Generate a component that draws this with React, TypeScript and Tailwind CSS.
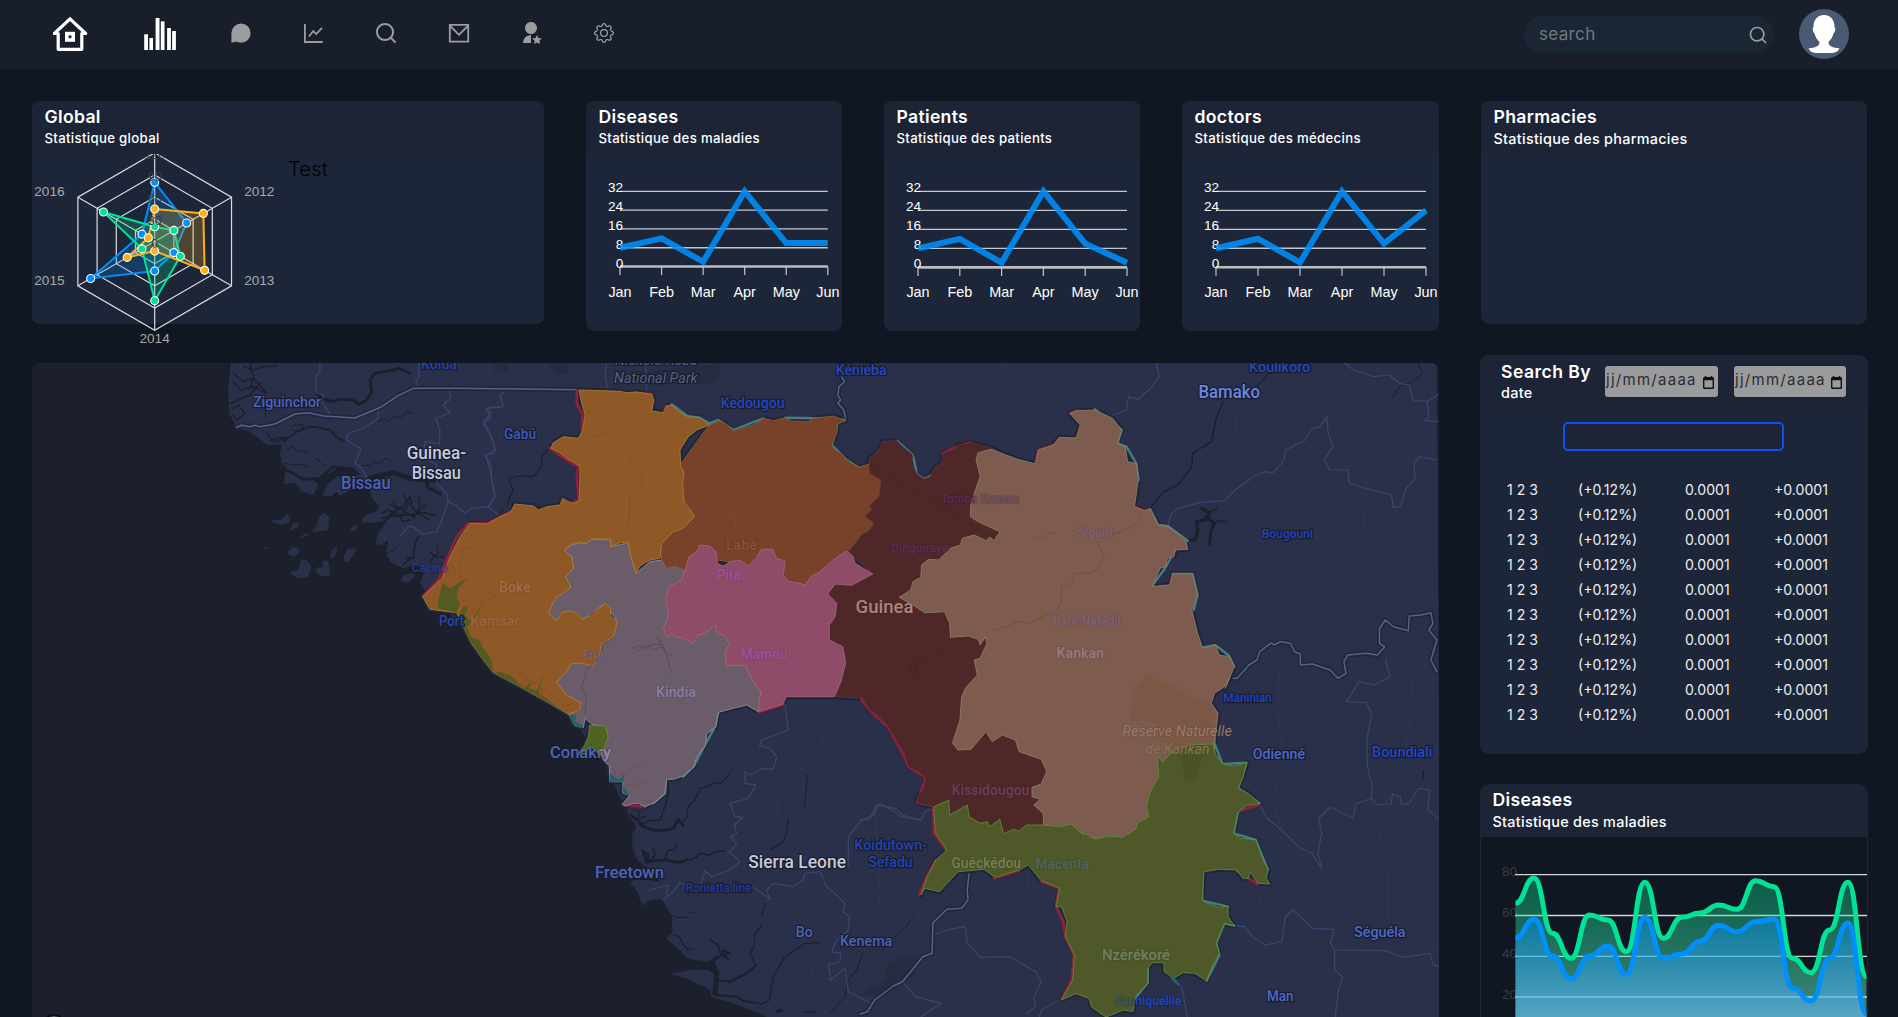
import React from "react";
import { RiUserStarFill, RiSearchLine } from "react-icons/ri";
import { BsGear } from "react-icons/bs";

/* ---------- map geometry ---------- */

type Sheet = "A" | "B" | "C" | "D" | "E";

// Map sheets: origin and units per pixel of each digitised grid.
const SHEETS: Record<Sheet, [number, number, number, number]> = {
  A: [20, 350, 3, 3],
  B: [400, 350, 3, 3],
  C: [820, 350, 2.529, 3],
  D: [400, 660, 3, 3],
  E: [860, 660, 2.7034, 3],
};

// Turns "B 10,20 30,40 D 5,6" into a polyline in map pixels.
function trace(src: string): string {
  let s = SHEETS.A;
  const out: string[] = [];
  for (const tok of src.trim().split(/\s+/)) {
    if (tok in SHEETS) {
      s = SHEETS[tok as Sheet];
      continue;
    }
    const [x, y] = tok.split(",").map(Number);
    out.push(`${(s[0] + x / s[2]).toFixed(1)},${(s[1] + y / s[3]).toFixed(1)}`);
  }
  return out.join(" ");
}

const LAND =
  "A 632,38 625,110 627,190 650,232 690,245 720,268 742,284 785,285 780,310 785,340 800,350 790,400 800,403 825,398 845,425 880,434 895,405 880,390 920,375 960,350 1000,352 1020,375 950,380 925,400 907,437 935,438 950,425 960,438 1000,415 1050,420 1055,445 1075,465 1075,480 1030,500 1025,515 1045,520 1100,512 1075,550 1065,582 1080,586 1105,570 1098,610 1110,635 1150,655 1180,645 1215,655 1200,700 1212,718 B 120,760 300,960 D 500,150 530,200 600,280 668,432 682,450 685,470 705,490 707,508 697,520 697,560 712,600 735,618 760,640 780,665 745,660 700,660 690,668 712,695 727,738 750,720 785,718 800,740 815,770 817,815 797,835 840,870 860,895 930,910 950,945 925,930 870,930 810,942 860,955 930,990 935,1012 1000,1030 1110,1075 E 1570,1075 C 1560,38";

const ISLANDS = [
  "A 752,512 785,508 800,492 812,500 805,520 785,525 765,520",
  "A 805,545 820,520 835,517 835,530 815,540",
  "A 872,545 890,525 898,500 910,488 928,500 925,540 895,545",
  "A 840,562 855,550 870,553 850,562",
  "A 802,605 820,590 838,598 838,610 820,620 808,615",
  "A 810,665 835,660 842,630 860,630 875,650 865,680 830,685",
  "A 885,665 893,650 905,655 908,632 925,632 930,665 925,680 905,678",
  "A 970,625 980,598 1000,595 1010,600 1000,615 985,635 975,637",
  "A 930,625 935,600 950,590 952,600 938,628",
  "A 988,540 1005,525 1015,530 1000,545",
  "A 1143,690 1150,675 1180,668 1188,678 1165,697 1150,697",
  "A 732,592 748,592 742,598 732,598",
];

const REGIONS: [string, string, string][] = [
  [
    "#6a5c69",
    "#8c8fa3",
    "B 492,600 515,585 540,578 560,580 575,568 632,568 632,590 685,578 690,610 708,670 750,635 785,630 800,655 825,650 855,660 868,620 1000,800 1040,950 D 1045,35 1060,65 1083,95 1075,155 1040,135 1000,145 955,157 948,200 920,222 917,255 890,290 882,320 850,348 820,358 800,358 795,400 760,430 735,440 715,430 700,430 675,438 668,432 690,405 668,400 668,365 630,365 628,318 610,300 600,270 625,230 615,200 575,192 555,175 550,203 525,197 507,165 543,128 500,105 470,68 500,20 B 515,940 545,935 580,948 605,880 652,815 615,760 548,808 510,782 470,812 445,790 465,745 512,712 497,680 520,655 515,620",
  ],
  [
    "#784129",
    "#7d6030",
    "B 928,225 955,212 975,220 1000,242 1060,225 1090,205 1120,212 1155,203 1175,213 1225,215 1240,205 1300,198 1337,212 1312,222 1312,245 1295,285 1305,300 1325,312 1340,330 1375,352 1408,342 1410,370 1443,390 1438,440 1410,465 1415,480 1395,500 1422,518 1410,540 1385,555 1350,600 1300,630 1260,665 1235,678 1215,706 1200,700 1165,695 1118,598 1085,598 1045,648 990,635 868,620 855,660 825,650 800,655 785,630 780,580 800,400",
  ],
  [
    "#4f2728",
    "#5f3336",
    "C 125,342 125,325 150,300 158,275 195,272 210,290 235,315 232,340 245,372 262,387 280,380 285,360 310,335 310,310 340,298 350,285 380,278 432,293 470,315 600,500 600,900 E 505,335 600,500 400,530 200,440 155,430 155,410 170,390 178,352 158,335 130,320 120,280 95,235 75,198 50,165 25,150 10,115 0,112 D 1390,115 1303,110 B 1325,985 1337,940 1328,890 1288,870 1288,825 1305,800 1310,760 1283,732 1305,702 1418,672 1340,602 1350,600 1385,555 1410,540 1422,518 1395,500 1415,480 1410,465 1438,440 1443,390 1410,370",
  ],
  [
    "#8f4c68",
    "#a06379",
    "B 868,620 890,605 900,585 930,588 948,605 952,640 970,648 990,635 1020,630 1045,648 1068,625 1085,598 1118,598 1128,625 1155,632 1150,675 1165,695 1200,700 1215,706 1235,678 1260,665 1300,630 1340,602 1360,620 1365,640 1418,672 1355,706 1305,702 1283,732 1310,760 1305,800 1288,825 1288,870 1328,890 1337,940 1325,985 D 1325,60 1303,110 1158,110 1150,132 1075,155 1078,120 1083,95 1060,65 1045,35 B 1040,950 1010,945 980,948 975,910 988,880 970,855 950,850 948,825 915,850 895,855 880,880 850,865 825,860 815,852 800,862 790,835 805,800 797,745 805,712 845,690 855,660",
  ],
  [
    "#8f5927",
    "#ab7a2f",
    "B 538,120 660,124 680,128 710,126 755,133 762,150 755,183 790,188 800,168 815,165 835,183 862,200 900,203 928,225 890,240 865,260 840,300 842,350 852,365 848,400 852,455 884,498 850,535 820,545 805,560 785,580 780,625 750,630 720,648 708,670 690,610 685,575 660,578 632,590 632,568 575,566 560,580 540,576 515,583 492,600 515,620 520,655 497,680 512,712 490,730 465,745 445,790 470,812 485,788 510,782 530,790 548,808 575,795 615,760 632,775 632,798 652,815 640,860 605,880 600,910 580,948 545,940 515,940 500,965 470,995 D 470,68 500,105 543,128 538,150 505,163 440,125 350,75 280,38 B 250,930 213,878 190,830 170,788 90,778 68,740 125,685 150,620 180,560 210,520 262,522 300,500 330,488 345,462 400,468 415,480 440,470 480,465 488,445 500,452 520,460 538,452 540,348 500,325 475,305 452,295 460,278 490,260 535,265 548,240 555,195 545,160",
  ],
  [
    "#7d5b4e",
    "#8a7d65",
    "C 400,308 432,298 470,315 500,328 545,342 552,300 590,285 605,262 648,264 658,225 632,190 650,182 695,180 740,205 763,240 752,280 772,290 778,335 800,340 805,390 795,470 820,482 835,478 855,525 880,530 925,570 930,598 898,600 895,620 878,625 875,650 860,655 840,710 885,705 892,672 942,672 955,735 940,780 955,850 968,895 1000,885 1010,915 1035,920 1048,950 1035,985 1025,1015 E 1000,50 985,80 958,100 950,130 968,160 958,250 960,300 850,400 700,560 600,520 497,495 495,460 470,435 488,418 465,410 465,382 490,372 505,335 490,298 430,275 420,240 385,225 358,245 340,215 300,268 265,270 250,250 270,180 275,110 285,85 C 398,975 390,930 405,925 422,880 418,860 405,885 400,868 375,858 330,862 328,820 315,785 265,788 235,765 200,742 230,720 235,695 255,682 257,645 275,628 300,630 330,595 355,585 360,565 390,555 420,572 430,560 440,572 455,545 400,515 380,500 382,460 405,380 395,330",
  ],
  [
    "#4e5828",
    "#5a8c3b",
    "E 200,440 240,420 242,465 290,435 295,470 325,490 345,485 350,500 378,478 388,522 415,508 430,513 450,495 497,495 540,500 570,492 610,530 640,537 670,528 710,532 745,508 750,490 780,470 775,440 780,410 790,385 808,350 803,290 818,305 850,270 890,255 955,252 960,280 980,312 1010,318 1045,308 1035,355 1022,385 1050,400 1080,430 1045,437 1022,455 1010,520 1030,535 1070,540 1090,600 1103,630 1098,655 1108,672 1075,670 1055,635 1050,655 1035,655 1018,630 970,628 930,635 925,722 970,742 995,738 995,770 1012,797 985,790 963,850 972,880 955,910 937,962 905,940 872,938 848,955 822,935 822,908 790,908 778,925 778,968 745,1010 738,1055 712,1050 665,1071 650,1060 625,1040 620,1015 585,1000 545,1020 575,960 580,885 555,830 560,785 545,740 530,740 540,685 490,662 470,635 455,615 430,630 365,652 335,628 265,635 215,695 175,685 165,705 180,655 205,600 235,570 205,520",
  ],
  ["#4f6323", "#6c8a30", "D 570,196 615,198 625,230 610,270 600,285 575,262 535,282 555,255 565,230"],
];

const COAST_GREEN = [
  "B 113,775 118,735 128,700 150,715 205,682 175,715 170,745 180,760 170,788",
  "B 175,800 190,770 205,768 195,795 215,815 250,750 230,800 200,830 213,860 240,872 250,895 275,930 280,968 250,930 213,878",
  "D 280,38 300,35 335,48 355,70 372,85 400,60 385,85 410,90 430,50 415,95 450,125 500,160 440,125 350,75",
];
const COAST_TEAL = ["D 507,165 530,165 525,185 550,195 548,205 520,195", "D 630,340 655,360 675,340 665,375 690,405 668,400 668,365 630,365", "E 838,955 848,950 870,980 858,975"];

// Misaligned edge of the administrative layer, showing red along the border.
const RED_EDGES = [
  "B 531,122 530,160 548,195 545,240",
  "B 536,350 530,380 536,450 520,456",
  "B 450,295 475,312 505,333 536,350",
  "B 70,738 115,690 140,630 170,560 205,520 262,520 330,485",
  "B 755,133 700,128",
  "B 793,186 797,168",
  "D 1075,157 1150,134",
  "D 668,434 735,440",
  "E 0,112 25,150 75,200 118,285 130,320 178,352 155,428 200,438",
  "E 198,445 200,520 232,568",
  "E 205,600 180,650 160,705",
  "E 362,655 430,632",
  "E 490,665 538,685 530,740 550,785 555,830 578,885 572,960 545,1018",
  "E 1020,455 1078,434",
  "E 1018,632 1050,655 1075,672",
  "E 585,1000 625,1015 652,1060",
  "C 125,340 150,300",
  "C 310,310 350,288 380,278",
  "C 545,342 552,300 590,285",
  "C 795,470 820,482 832,476",
  "C 840,712 885,707 892,674",
  "C 632,190 650,182",
];
const TEAL_EDGES = [
  "B 815,163 862,198 900,203 928,220 955,210 1000,240 1090,205",
  "B 1155,203 1240,205 1335,210",
  "B 1312,222 1296,285 1340,330 1375,352",
  "C 195,272 235,315 245,372 262,387 285,375",
  "C 695,178 763,240 752,280 775,290 800,340 806,390",
  "C 835,478 855,525 880,528 930,572",
  "C 898,600 875,650 840,708",
  "C 892,672 942,672 955,735 945,780",
  "C 965,893 1000,885 1035,918 1048,950",
  "D 955,157 945,200 915,255 882,318 850,350",
  "D 797,360 795,400 760,430",
  "E 955,160 958,250 980,312 1045,308 1022,385 1080,430",
  "E 1022,455 1010,520 1070,540 1103,630",
  "E 925,640 925,722 995,740",
  "E 1012,797 985,790 963,850 972,885 937,962",
  "E 778,925 778,968 740,1020",
];

const NATIONAL = [
  "A 650,232 665,226 690,230 705,226 720,230 765,222 825,192 865,188 912,198 1005,204 1085,170 1135,137 1180,115 B 180,115 538,119",
  "C 55,80 62,95 48,110 45,135 52,150 45,160 60,180 65,205",
  "C 1045,985 1055,985 1085,945 1105,930 1112,905 1142,878 1148,885 1165,875 1190,880 1200,905 1215,912 1215,945 1245,942 1290,960 1310,985 1330,970 1325,935 1335,915 1380,910 1410,915 1428,890 1415,880 1415,835 1430,810 1450,830 1488,842 1490,798 1520,795 1545,788 1550,820 1540,840 1560,870 1545,930 1560,965",
  "E 295,635 290,690 292,720 275,745 235,748 197,788 195,880 170,890 115,965 90,978 40,1020 20,1055 0,1062",
];
const ADMIN = [
  "A 900,38 900,65 888,80 887,128 910,135 905,155 930,192",
  "A 1197,38 1197,80 1187,95 1195,112",
  "A 1075,175 1075,205 1030,235 985,250 980,270 1023,297 1005,340 1020,350 1040,380",
  "A 1285,118 1293,145 1270,165 1290,190 1247,205 1260,240 1258,282 1215,275 1210,320 1250,345 1250,400 1280,430 1285,455 1270,500 1250,545 1205,553 1180,530 1165,530 1140,558",
  "A 1438,170 1398,175 1412,190 1392,215 1412,260 1425,290 1422,310 1395,315 1412,345 1415,385 1425,440 1405,470 1435,495",
  "B 325,120 300,135 310,170 258,175 272,200 250,220 275,260 285,300 258,315 270,360 285,440 265,470 295,495",
  "B 145,455 165,465 195,490 215,475 265,470",
  "B 620,38 615,70 622,115",
  "B 735,40 742,90 738,125",
  "C 850,38 858,78 840,110 805,148 780,140 775,180 735,198",
  "C 880,525 888,492 905,475 960,458 1025,452 1045,425 1095,380 1125,365 1145,368 1172,335 1178,300 1225,272 1245,235 1265,230 1282,200 1285,250 1298,290 1275,330 1290,360 1335,360 1338,398 1380,415 1445,435 1450,472 1468,470 1480,420 1505,385 1502,340 1515,320 1560,330",
  "C 1325,38 1350,60 1400,80 1440,75 1465,100 1490,105 1500,150 1535,155 1540,200 1530,212 1563,214",
  "C 1535,155 1563,135",
  "E 1420,0 1433,50 1390,75 1350,65 1315,125 1368,128 1383,160 1370,240 1372,320 1385,380 1382,415 1340,432 1333,475 1272,442 1240,475 1248,520 1238,580 1248,625 1222,580 1190,565 1140,510 1100,475 1080,432",
  "E 1382,415 1400,435 1435,432 1440,402 1460,410 1465,435 1485,430 1510,385 1540,390 1535,450 1565,475",
  "E 1012,797 1040,800 1060,830 1095,855 1140,845 1150,770 1170,750 1225,805 1282,808 1272,850 1283,870 1420,872 1470,892 1540,880 1550,915 1565,920",
  "E 1283,870 1283,930 1305,950 1292,1000 1285,1071",
  "E 197,825 240,808 285,800 290,850 325,892 405,890 475,935 490,965 470,1010 475,1040 450,1060",
  "E 118,968 150,1010 220,1030 165,1071",
  "E 870,980 885,1071",
  "E 540,1020 490,1050 485,1071",
  "D 1155,132 1165,210 1085,240 1078,255 1110,265 1130,290 1120,328 1090,325 1050,345 1035,335 1035,370 1068,375 1045,415 990,430 1005,470 1030,472 1003,495 1010,520 993,530 1010,555 988,575 1020,605 990,630 935,650 915,632 903,670 870,680 840,668 815,700 795,715",
  "D 750,690 805,675 800,705",
  "D 1060,680 1110,718 1100,690 1120,670 1180,680 1210,660 1215,640 1260,635 1280,680 1310,705 1335,730 1330,755 1348,770 1345,810 1310,840 1295,875 1322,880 1320,905 1285,915 1292,960 1335,925 1345,995 1410,1028",
  "D 1560,480 1500,470 1485,455 1440,430 1420,465 1385,480 1345,530 1345,620",
  "E 0,480 25,480 45,435 95,445 115,465 165,480 175,455 198,445",
];
const OPEN_ROADS = [
  "A 735,38 790,72 815,80 820,125 880,130",
  "A 1000,65 1130,90 1160,60",
  "C 115,60 125,118 205,130 270,130 350,140 400,90 475,42",
  "C 830,330 870,260 960,215 1050,145 1190,100 1330,85 1360,130 1400,200 1400,320 1370,450 1380,550",
  "C 1050,180 1060,350 1120,440 1180,540 1260,565 1340,640 1400,750 1465,790 1468,820",
  "C 1260,560 1400,540 1563,562",
  "E 1135,20 1130,130 1140,270 1120,430 1150,560 1090,660 1080,750",
  "E 1500,0 1490,120 1480,240 1440,380 1400,500 1430,620 1430,800 1565,870",
  "E 0,180 60,230",
  "E 460,630 450,690 350,690 330,640",
  "E 495,800 530,840",
  "D 1130,480 1100,500 1170,580 1250,610",
  "D 1310,160 1275,210 1260,290 1200,330 1135,350 1130,480",
  "D 1310,160 1390,170 1440,200 1505,320 1440,380 1425,440 1440,700 1430,800",
  "D 700,590 760,560 850,530 900,560 1000,540 1100,500",
  "D 1090,735 1160,760 1200,800 1240,950 1290,960",
];
const REGION_ROADS = [
  "B 660,180 720,240 740,350 745,420 780,450 850,455",
  "B 850,470 960,480 1000,500 1020,560",
  "B 1030,420 1000,480 1010,560",
  "B 1215,700 1170,800 1100,900 1040,1000",
  "B 500,480 480,530 360,600",
  "C 790,380 730,440 705,500 705,565",
  "C 250,770 300,780 280,740 440,810",
  "C 560,790 620,830 680,860 680,980",
  "E 540,0 520,140 470,170 460,300 540,380 640,390",
  "E 640,0 650,200 680,300 690,450 690,530",
  "E 780,560 800,540 770,700 760,820",
  "E 580,640 640,720 650,800 650,960 690,1020",
];
const RIVERS: [number, string][] = [
  [1.8, "A 632,160 690,135 720,100"],
  [2.8, "A 888,128 905,145 940,155 960,148 1000,150 1018,163 1040,150 1055,125 1050,90 1065,70 1110,62 1135,55 1170,70"],
  [2, "A 790,275 830,245 870,230 890,232 930,240 950,262 970,272"],
  [5, "A 1050,385 1090,375 1120,368 1170,385 1250,390"],
  [3, "A 1220,395 1225,415 1240,420 1262,432"],
  [2.8, "A 800,360 850,388 900,385 940,350 965,355"],
  [1, "A 1020,350 1035,345 1050,348 1060,338 1085,338 1095,325 1115,332"],
  [1, "A 1075,215 1090,208 1105,215 1120,202 1145,200 1160,185 1180,190"],
  [1, "A 800,300 820,288 830,302 845,305 860,308"],
  [1, "A 795,340 820,345 845,342 865,352"],
  [1, "A 885,325 900,335 915,350"],
  [1.3, "A 640,70 670,95 700,85 740,130 700,110 660,120 640,95"],
  [1.3, "A 670,50 700,60 730,50 770,48"],
  [1.3, "A 690,40 700,80 690,120"],
  [1.3, "A 638,175 655,165 675,190 650,210 640,195"],
  [1, "A 730,170 738,182 735,200"],
  [1.3, "A 740,250 755,268 775,265 800,262 770,275 750,272"],
  [1, "A 812,230 830,222 850,225 840,245 820,240"],
  [1.8, "A 1085,505 1110,498 1120,485 1150,470 1170,440 1175,470 1190,485 1220,490 1245,495"],
  [1.8, "A 1090,518 1130,480 1120,455"],
  [1.4, "A 1145,500 1165,460 1150,435"],
  [1.4, "A 1180,505 1200,470 1195,440"],
  [1.4, "A 1110,465 1130,470 1180,500 1215,465"],
  [1.4, "A 1105,500 1150,495 1200,492 1225,508"],
  [1.4, "A 1085,490 1105,480 1130,490 1150,515 1170,510"],
  [1.8, "A 1150,645 1170,625 1160,622 1180,625 1185,580 1195,560"],
  [1.3, "A 1230,640 1240,620 1255,610 1250,585"],
  [1.3, "A 1230,605 1245,620 1272,622"],
  [1, "A 1100,610 1118,602 1130,592"],
  [1.2, "B 325,450 340,420 325,385 355,378 400,380 425,350 425,320 445,300"],
  [1, "B 330,440 320,470 300,490"],
  [1.4, "C 838,468 870,425 905,405 940,350 942,310 990,275 1003,200 1020,155"],
  [1.2, "C 1105,110 1130,75 1145,68"],
  [1, "C 1510,38 1525,70 1500,95 1465,110 1450,140"],
  [3.4, "C 925,570 948,570 955,545 953,515 980,508 985,488 965,475"],
  [3, "C 975,500 998,520 988,545 985,582"],
  [1.4, "C 990,525 1010,512 1028,515"],
  [1.4, "C 980,490 1005,475"],
  [1.2, "D 995,330 980,352 960,370 940,368 925,380 900,385 885,420 865,440 860,470 845,495"],
  [2.8, "D 690,465 712,480 730,500 760,510 790,512 820,505 835,480 850,495"],
  [1.4, "D 720,495 750,482 780,480 795,440 805,400 805,370"],
  [1.2, "D 700,450 720,455 715,475 735,470"],
  [1.2, "D 1222,345 1218,400 1212,438"],
  [1.2, "D 1165,475 1160,520 1150,545 1110,570"],
  [2.8, "D 730,575 740,605 765,602 800,600 828,607 850,605 862,598"],
  [1.8, "D 725,572 745,582 742,610 765,585 760,565"],
  [1.6, "D 870,600 890,592 898,580 925,585 950,575 975,572"],
  [1.3, "D 795,595 805,570 825,570 828,552"],
  [1.3, "D 812,765 830,772 860,772"],
  [1, "D 868,762 875,755 888,758"],
  [1.3, "D 815,822 838,830 850,855 862,868 880,868"],
  [5, "D 935,905 950,940 945,1000"],
  [3, "D 890,905 930,910 950,890"],
  [1.6, "D 940,905 965,885 990,880 965,870 985,900 960,880 955,855 930,840"],
  [2.2, "D 950,960 990,965 1010,955 1040,940 1070,915"],
  [1.2, "D 1065,915 1050,880 1062,860 1065,820 1085,795"],
  [1.2, "D 1098,730 1085,765"],
  [2, "D 950,1005 1010,1010 1030,1022 1075,1030"],
  [1.3, "D 1080,1035 1108,1020 1120,950 1155,890 1215,850 1260,848"],
  [1, "D 1390,875 1370,930 1345,960 1335,1010 1290,1060"],
  [1, "D 1540,770 1520,800 1480,835"],
  [3, "D 1130,1055 1145,1050"],
  [1.6, "D 1210,1055 1245,1055"],
  [2, "E 1522,335 1524,355"],
];
const RIVERS_INLAND: [string, string][] = [
  ["#80502a", "B 550,270 565,262 M"],
  ["#80502a", "B 580,258 615,250 640,245"],
  ["#80502a", "B 655,305 665,312 680,310"],
  ["#80502a", "B 688,322 700,340 702,355"],
  ["#80502a", "B 715,365 728,385 722,405 705,420"],
  ["#80502a", "B 688,440 690,480 685,528"],
  ["#854e27", "B 180,700 185,670 175,650 190,620 185,600 210,593"],
  ["#904a25", "B 215,790 225,770 240,755 265,748 290,740 270,730"],
  ["#904a25", "B 150,640 165,660 160,690"],
  ["#904a25", "D 330,45 350,60 370,75 375,50 360,40 385,60 405,70 430,50 440,25"],
  ["#904a25", "D 420,110 425,85 440,85 460,110 480,120 490,140 520,130"],
  ["#5c4c58", "B 695,895 715,888 740,895 760,882 785,885 770,860"],
  ["#5c4c58", "B 710,905 745,885 755,900 790,890 800,920 815,970"],
  ["#5c4c58", "B 780,870 795,910 815,915"],
  ["#5c4c58", "B 545,1010 560,960 600,920 610,880 640,865"],
  ["#5c4c58", "D 545,80 560,120 555,160"],
  ["#7b4a55", "D 640,330 650,350 690,330 700,322 735,310"],
  ["#7b4a55", "D 670,380 700,368 705,375 740,365"],
  ["#70503f", "C 815,485 808,510 790,530 770,540 735,555"],
  ["#70503f", "C 700,575 718,620 705,655 680,670 645,670 635,705 610,710 610,760 590,790 560,800 530,820 500,815 470,830 440,840"],
  ["#70503f", "C 545,560 560,565 575,550 595,548"],
  ["#472022", "C 320,885 300,905 M"],
  ["#472022", "C 280,915 262,930 245,932"],
  ["#472022", "C 225,945 228,965 240,990"],
  ["#472022", "E 150,0 150,25"],
];

type Label = [string, number, number, number, number, string, ("i" | "b" | "n")?];
// text, left, right, baseline, size, colour, kind (i = italic park name)
const LABELS: Label[] = [
  ["Kolda", 421, 457, 369, 15, "#2743a8"],
  ["Ziguinchor", 253, 321, 407, 15.5, "#4b64b8"],
  ["Guinea-", 406.7, 466, 459, 18, "#c6c9dd"],
  ["Bissau", 411.7, 461, 479, 18, "#c6c9dd"],
  ["Bissau", 341, 390.7, 488.7, 17.5, "#4b64b8"],
  ["Gabú", 504, 536, 439, 15.5, "#3f5ab8"],
  ["Kéniéba", 835.7, 886.7, 375, 15, "#2646bd"],
  ["Kedougou", 720.7, 784.5, 407.7, 15.5, "#2646bd"],
  ["Niokolo-Koba", 615, 697.5, 365, 14.5, "#596184", "i"],
  ["National Park", 614, 697.7, 382.5, 14.5, "#596184", "i"],
  ["Koulikoro", 1249, 1310.5, 372, 14.5, "#2646bd"],
  ["Bamako", 1198.5, 1260, 398.3, 18, "#6b86e0"],
  ["Bougouni", 1262, 1312.7, 538, 13, "#1f44c4"],
  ["Maninian", 1223.6, 1271.7, 702, 13, "#1f44c4"],
  ["Odienné", 1252.8, 1305, 759, 15.5, "#4f69c4"],
  ["Boundiali", 1372, 1432.5, 756.7, 15, "#2646c8"],
  ["Séguéla", 1354, 1405.6, 936.7, 15.5, "#4f69c4"],
  ["Man", 1267, 1293.5, 1000.7, 15.5, "#4f69c4"],
  ["Freetown", 595, 664, 877.7, 17, "#4b64b8"],
  ["Ronietta line", 685.7, 751.7, 891.7, 12.5, "#1f3a9e"],
  ["Sierra Leone", 748.3, 846, 868, 17.5, "#c6c9dd"],
  ["Koidutown-", 854.3, 927, 850.3, 15.5, "#2444ae"],
  ["Sefadu", 868.3, 912.7, 867.3, 15.5, "#2444ae"],
  ["Bo", 795.7, 812.7, 936.7, 15.5, "#4b64b8"],
  ["Kenema", 840, 892.3, 945.7, 15.5, "#4b64b8"],
];
const OVERLAID: Label[] = [
  ["Boké", 499, 530.7, 592, 15.5, "#a06c45"],
  ["Kamsar", 470, 519.5, 625.7, 15.5, "#99653f"],
  ["Labé", 726, 756.7, 550, 15.5, "#8c4d3b"],
  ["Pita", 716.7, 741, 580, 15.5, "#9a50a3"],
  ["Mamou", 740.7, 787.7, 659.3, 15.5, "#9a50a3"],
  ["Fria", 583, 604, 660, 14, "#7a5f7c"],
  ["Kindia", 656, 696, 696.7, 15.5, "#8c7ba5"],
  ["Guinea", 855.6, 913.5, 613, 19, "#ab8380"],
  ["Dinguiraye", 891, 948.5, 552.3, 13, "#5b2a5a"],
  ["Siguiri", 1077.4, 1112.6, 537.3, 13.5, "#806075"],
  ["Baté-Nafadji", 1053, 1120.5, 625.3, 13, "#806075"],
  ["Kankan", 1056.5, 1104, 658.3, 15.5, "#9a7788"],
  ["Kissidougou", 951.7, 1029.4, 794.5, 14.5, "#6c3d60"],
  ["Guéckédou", 951.4, 1021, 867.7, 15, "#758055"],
  ["Macenta", 1035.7, 1089, 869.3, 15, "#4c6562"],
  ["Nzérékoré", 1102, 1170, 960, 15.5, "#6f8060"],
];

// Labels that straddle a region edge: the covered part takes the second colour.
const STRADDLING: [Label, number, string][] = [
  [["Conakry", 550, 611, 757.7, 17, "#4b64b8"], 600, "#8888b4"],
  [["Cacine", 412, 447.7, 571.5, 13, "#1f3a9e"], 442, "#6a3a72"],
  [["Sanniquellie", 1114.5, 1181.5, 1005.3, 13, "#1f44c4"], 1133, "#3a5660"],
  [["Tomba Kanssa", 941, 1019, 502.7, 13, "#5b2a5a"], 975, "#6d4b62"],
];

function MapLabel({ label, halo, fill }: { label: Label; halo: string; fill?: string }) {
  const [text, x0, x1, y, size, color, kind] = label;
  return (
    <text
      x={x0}
      y={y}
      textLength={x1 - x0}
      lengthAdjust="spacingAndGlyphs"
      fontSize={size}
      fontStyle={kind === "i" ? "italic" : "normal"}
      fontWeight={kind === "i" ? 400 : 500}
      fill={fill ?? color}
      stroke={halo}
      strokeWidth={2.6}
      strokeLinejoin="round"
      paintOrder="stroke"
    >
      {text}
    </text>
  );
}

function GuineaMap() {
  return (
    <svg viewBox="32 363 1407 654" className="block h-[654px] w-[1407px] font-[Roboto,sans-serif]" strokeLinejoin="round" strokeLinecap="round">
      <rect x="32" y="363" width="1407" height="654" fill="#1c1f2c" />
      <polygon points={trace(LAND)} fill="#2a3049" />
      {ISLANDS.map((p) => (
        <polygon key={p} points={trace(p)} fill="#2a3049" />
      ))}
      <g fill="#262c40">
        <polygon points={trace("B 280,45 320,40 325,65 285,68")} />
        <polygon points={trace("B 445,45 480,40 512,50 505,70 475,75 455,60")} />
        <polygon points={trace("B 660,75 965,40 960,70 935,105 880,100 760,105 700,95")} />
        <polygon points={trace("D 1460,915 1510,890 1550,890 1540,950 1440,1005 1380,1005 1400,990 1460,960")} />
      </g>
      <g fill="none" stroke="#2f3651" strokeWidth="1">
        {OPEN_ROADS.map((p) => (
          <polyline key={p} points={trace(p)} />
        ))}
      </g>
      <g fill="none" stroke="#1c1f2c">
        {RIVERS.map(([w, p]) => (
          <polyline key={p} points={trace(p)} strokeWidth={w} />
        ))}
      </g>
      <g fill="none" stroke="#3a4670" strokeWidth="1.2">
        {ADMIN.map((p) => (
          <polyline key={p} points={trace(p)} />
        ))}
      </g>
      <g fill="none" stroke="#22273b" strokeWidth="5">
        {NATIONAL.map((p) => (
          <polyline key={p} points={trace(p)} />
        ))}
      </g>
      <g fill="none" stroke="#56618c" strokeWidth="1.5">
        {NATIONAL.map((p) => (
          <polyline key={p} points={trace(p)} />
        ))}
      </g>

      <g fill="none" stroke="#20263a" strokeWidth="5">
        {REGIONS.map(([, , p]) => (
          <polygon key={p} points={trace(p)} />
        ))}
      </g>
      {LABELS.map((l) => (
        <MapLabel key={l[0] + l[1]} label={l} halo="#191d2e" />
      ))}
      <g fill="none" stroke="#8f2038" strokeWidth="2.8">
        {RED_EDGES.map((p) => (
          <polyline key={p} points={trace(p)} />
        ))}
      </g>
      <g fill="none" stroke="#437f80" strokeWidth="2.4">
        {TEAL_EDGES.map((p) => (
          <polyline key={p} points={trace(p)} />
        ))}
      </g>
      {REGIONS.map(([fill, edge, p]) => (
        <polygon key={p} points={trace(p)} fill={fill} stroke={edge} strokeWidth="0.9" />
      ))}
      {COAST_GREEN.map((p) => (
        <polygon key={p} points={trace(p)} fill="#535b23" />
      ))}
      {COAST_TEAL.map((p) => (
        <polygon key={p} points={trace(p)} fill="#27606c" />
      ))}
      <polygon points={trace("E 740,80 755,75 780,40 800,60 840,70 860,85 890,110 915,120 945,135 960,160 955,250 890,252 850,268 810,245 800,190 770,180 730,185")} fill="#7a5845" />
      <polygon points={trace("E 865,290 880,280 925,290 915,330 905,367 880,367")} fill="#4a5324" />
      <g fill="none" strokeWidth="1">
        {RIVERS_INLAND.map(([c, p]) => (
          <polyline key={p} points={trace(p.replace(" M", ""))} stroke={c} />
        ))}
      </g>
      <g fill="none" stroke="#ffffff" strokeOpacity="0.025" strokeWidth="1.2">
        {REGION_ROADS.map((p) => (
          <polyline key={p} points={trace(p)} />
        ))}
      </g>
      <polyline points={trace("C 125,342 440,565")} fill="none" stroke="#35301c" strokeWidth="1" />

      {OVERLAID.map((l) => (
        <MapLabel key={l[0]} label={l} halo="rgba(0,0,0,0.08)" />
      ))}
      <MapLabel label={["Port", 439, 464, 625.7, 15.5, "#2646a8"]} halo="#191d2e" />
      <defs>
        {STRADDLING.map(([l, edge, over], i) => (
          <linearGradient key={l[0]} id={`edge${i}`} gradientUnits="userSpaceOnUse" x1={l[1]} x2={l[2]} y1="0" y2="0">
            <stop offset={(edge - l[1]) / (l[2] - l[1])} stopColor={i === 2 ? over : l[5]} />
            <stop offset={(edge - l[1]) / (l[2] - l[1])} stopColor={i === 2 ? l[5] : over} />
          </linearGradient>
        ))}
      </defs>
      {STRADDLING.map(([l], i) => (
        <MapLabel key={l[0]} label={l} halo="rgba(0,0,0,0.12)" fill={`url(#edge${i})`} />
      ))}
      <MapLabel label={["Réserve Naturelle", 1122.6, 1231.8, 735.7, 14.5, "#96796c", "i"]} halo="rgba(0,0,0,0.06)" />
      <MapLabel label={["de Kankan", 1145.6, 1209.6, 753.8, 14.5, "#877659", "i"]} halo="rgba(0,0,0,0.06)" />
      <circle cx="54" cy="1026" r="10.5" fill="#fff" stroke="#000" strokeOpacity="0.8" strokeWidth="2.5" />
    </svg>
  );
}

/* ---------- charts ---------- */

const RADAR_CX = 122.7;
const RADAR_CY = 87.5;
const RADAR_R = 88.7;
const spoke = (i: number, v: number) => {
  const a = (Math.PI / 3) * i;
  const r = (v / 120) * RADAR_R;
  return [RADAR_CX + r * Math.sin(a), RADAR_CY - r * Math.cos(a)];
};
const ring = (vals: number[]) => vals.map((v, i) => spoke(i, v).map((n) => n.toFixed(2)).join(",")).join(" ");
const RADAR_SERIES = [
  { color: "#008ffb", vals: [80, 50, 30, 40, 100, 20] },
  { color: "#00e396", vals: [20, 30, 40, 80, 20, 80] },
  { color: "#feb019", vals: [44, 76, 78, 13, 43, 10] },
];

function Radar() {
  return (
    <svg width="257" height="190" viewBox="0 0 257 190" className="shrink-0 overflow-visible font-['Liberation_Sans',sans-serif] [clip-path:inset(0_0_-20px_0)]">
      {[30, 60, 90, 120].map((v) => (
        <polygon key={v} points={ring(Array(6).fill(v))} fill="none" stroke="#d9dbe0" strokeWidth="1.2" />
      ))}
      {[0, 1, 2, 3, 4, 5].map((i) => {
        const [x, y] = spoke(i, 120);
        return <line key={i} x1={RADAR_CX} y1={RADAR_CY} x2={x} y2={y} stroke="#d9dbe0" strokeWidth="1.2" />;
      })}
      {RADAR_SERIES.map((s) => (
        <polygon key={s.color} points={ring(s.vals)} fill={s.color} fillOpacity="0.22" stroke={s.color} strokeWidth="2" />
      ))}
      {RADAR_SERIES.map((s) =>
        s.vals.map((v, i) => {
          const [x, y] = spoke(i, v);
          return <circle key={s.color + i} cx={x} cy={y} r="4" fill={s.color} stroke="#fff" strokeWidth="1.1" />;
        })
      )}
      <g fontSize="12.5" fill="#373d3f" textAnchor="middle">
        {[0, 30, 60, 90, 120].map((v) => (
          <text key={v} x={RADAR_CX} y={RADAR_CY - (v / 120) * RADAR_R + 6}>
            {v}
          </text>
        ))}
      </g>
      <g fontSize="13.6" fill="#a8a8a8">
        <text x="2.3" y="42.4">2016</text>
        <text x="2.3" y="131.4">2015</text>
        <text x="212.2" y="42.4">2012</text>
        <text x="212.2" y="131.4">2013</text>
        <text x="107.5" y="188.6">2014</text>
      </g>
    </svg>
  );
}

const MONTHS = ["Jan", "Feb", "Mar", "Apr", "May", "Jun"];

function Trend({ vals, x1, y0 }: { vals: number[]; x1: number; y0: number }) {
  const left = 34;
  const top = 37.4;
  const x = (i: number) => left + (i * (x1 - left)) / 5;
  const y = (v: number) => y0 - (v * (y0 - top)) / 32;
  return (
    <svg width="256" height="177" viewBox="0 0 256 177" className="block font-['Liberation_Sans',sans-serif]">
      {[8, 16, 24, 32].map((v) => (
        <line key={v} x1={left} x2={x1} y1={y(v)} y2={y(v)} stroke="#c4c7cb" strokeWidth="1.3" />
      ))}
      <line x1={left} x2={x1} y1={y0} y2={y0} stroke="#b9bcc1" strokeWidth="2.6" />
      {MONTHS.map((m, i) => (
        <line key={m} x1={x(i)} x2={x(i)} y1={y0} y2={y0 + 8.5} stroke="#c4c7cb" strokeWidth="1.2" />
      ))}
      <g fontSize="13.6" fill="#fff" textAnchor="end">
        {[0, 8, 16, 24, 32].map((v) => (
          <text key={v} x={left + 3.2} y={y(v) + 1}>
            {v}
          </text>
        ))}
      </g>
      <g fontSize="14.4" fill="#fff" textAnchor="middle">
        {MONTHS.map((m, i) => (
          <text key={m} x={x(i)} y={y0 + 30}>
            {m}
          </text>
        ))}
      </g>
      <polyline points={vals.map((v, i) => `${x(i)},${y(v)}`).join(" ")} fill="none" stroke="#008ffb" strokeOpacity="0.88" strokeWidth="6" />
    </svg>
  );
}

// Heights in thirds of a pixel below the top of the drawing area.
const UPPER = [199, 123, 289, 364, 234, 249, 344, 136, 304, 241, 228, 204, 217, 131, 149, 364, 407, 279, 136, 419];
const LOWER = [302, 247, 357, 425, 357, 327, 413, 241, 364, 351, 313, 265, 284, 254, 247, 454, 492, 364, 258, 531];
function wave(vals: number[]) {
  const step = 18.47;
  return vals
    .map((v, i) => {
      const px = 34.5 + i * step;
      const py = v / 3;
      if (!i) return `M${px},${py}`;
      const mid = px - step / 2;
      return `C${mid},${vals[i - 1] / 3} ${mid},${py} ${px},${py}`;
    })
    .join(" ");
}

function AreaChart() {
  return (
    <svg width="386" height="240" viewBox="0 0 386 240" className="block font-['Liberation_Sans',sans-serif]">
      <defs>
        <linearGradient id="up" gradientUnits="userSpaceOnUse" x1="0" y1="40" x2="0" y2="200">
          <stop offset="0" stopColor="#00e396" stopOpacity="0.34" />
          <stop offset="1" stopColor="#80f1cb" stopOpacity="0.55" />
        </linearGradient>
        <linearGradient id="low" gradientUnits="userSpaceOnUse" x1="0" y1="80" x2="0" y2="190">
          <stop offset="0" stopColor="#008ffb" stopOpacity="0.4" />
          <stop offset="1" stopColor="#70bcf8" stopOpacity="0.6" />
        </linearGradient>
      </defs>
      <g fontSize="13.6" fill="#373d3f" textAnchor="end">
        <text x="36.2" y="39">80</text>
        <text x="36.2" y="80">60</text>
        <text x="36.2" y="121">40</text>
        <text x="36.2" y="162">20</text>
      </g>
      {[37.7, 78.5, 119.3, 160].map((y) => (
        <line key={y} x1="34" x2="386" y1={y} y2={y} stroke="#d5d7da" strokeWidth="1.3" />
      ))}
      <path d={`${wave(UPPER)} V240 H34.5 Z`} fill="url(#up)" />
      <path d={wave(UPPER)} fill="none" stroke="#00e396" strokeWidth="5" />
      <path d={`${wave(LOWER)} V240 H34.5 Z`} fill="url(#low)" />
      <path d={wave(LOWER)} fill="none" stroke="#008ffb" strokeWidth="5" />
    </svg>
  );
}

/* ---------- shell ---------- */

function CardHead({ title, sub, small }: { title: string; sub: string; small?: boolean }) {
  return (
    <div className="h-[53px] shrink-0 bg-[#1c2436] pt-[4px] pl-[12.5px] text-white">
      <div className="text-[17.6px] leading-[23px] font-semibold tracking-[0.018em]">{title}</div>
      <div
        className={
          small
            ? "mt-px text-[13.2px] leading-[18px] font-medium tracking-[0.025em]"
            : "mt-px text-[14.4px] leading-[19px] font-medium tracking-[0.02em]"
        }
      >
        {sub}
      </div>
    </div>
  );
}

function DateField({ className }: { className: string }) {
  return (
    <div className={"flex h-[31px] items-center justify-between rounded-[3px] bg-[#9a9b9d] pr-[4px] pl-[1px] text-[#2b2d31] " + className}>
      <span className="-mt-[2px] text-[15px] tracking-[0.085em] whitespace-nowrap">jj/mm/aaaa</span>
      <svg width="11" height="13" viewBox="0 0 11 13" className="mt-[1px] shrink-0">
        <path d="M2.5 0v2M8.5 0v2" stroke="#111" strokeWidth="1.4" />
        <rect x="0.7" y="1.7" width="9.6" height="10.6" rx="0.6" fill="none" stroke="#111" strokeWidth="1.4" />
        <path d="M0.7 3h9.6" stroke="#111" strokeWidth="2.4" />
      </svg>
    </div>
  );
}

export default function App() {
  return (
    <div className="h-[1017px] w-[1898px] overflow-hidden bg-[#101622] font-[Inter,'Noto_Sans',sans-serif]">
      <header className="flex h-[69px] items-center bg-[#181f2b] pl-[51px] text-[#9b9da0]">
        <svg width="38" height="36" viewBox="0 0 38 36" className="shrink-0">
          <path d="M19 1.8 L34.6 16.5 H30.8 V32.3 H7.2 V16.5 H3.4 Z" fill="none" stroke="#fff" strokeWidth="3.2" strokeLinejoin="round" />
          <rect x="15.8" y="16.6" width="6.4" height="6.4" fill="none" stroke="#fff" strokeWidth="3.6" />
        </svg>
        <svg width="33" height="33" viewBox="0 0 33 33" className="ml-[55px] shrink-0" fill="#fff">
          <rect x="0.2" y="16.3" width="3.8" height="15.7" />
          <rect x="5.4" y="20" width="3.6" height="12" />
          <rect x="11.6" y="0" width="3.9" height="32" />
          <rect x="16.8" y="3.3" width="3.7" height="28.7" />
          <rect x="23.1" y="10" width="3.8" height="22" />
          <rect x="28.1" y="13" width="3.8" height="19" />
        </svg>
        <div className="-mt-[4px] ml-[52px] flex items-center gap-[48.6px]">
          <svg width="24" height="24" viewBox="0 0 24 24" fill="currentColor">
            <path d="M2.4 21.5 V12 A9.6 9.6 0 1 1 12 21.7 C9.9 21.7 8.6 21.2 7.6 20.6 C6 21.2 4.2 21.5 2.4 21.5 Z" />
          </svg>
          <svg width="24" height="24" viewBox="0 0 24 24" fill="none" stroke="currentColor" strokeWidth="1.8">
            <path d="M2.9 3 V21 H20.8 M7 15.5 L11.2 10 L14.2 13 L20 6.8" />
          </svg>
          <RiSearchLine size={24} />
          <svg width="24" height="24" viewBox="0 0 24 24" fill="none" stroke="currentColor" strokeWidth="1.8">
            <path d="M2.8 3.8 H21.2 V20.6 H2.8 Z M3.2 5 L12 13.8 L20.8 5" />
          </svg>
          <RiUserStarFill size={24} />
          <BsGear size={20} className="mx-[2px]" />
        </div>
        <div className="ml-auto flex h-[37px] w-[250px] items-center justify-between rounded-full bg-[#1b2635] pr-[6px] pl-[15px]">
          <span className="text-[17px] tracking-[0.02em] text-[#75787c]">search</span>
          <RiSearchLine size={20} />
        </div>
        <div className="-mt-px mr-[49px] ml-[25px] size-[50px] overflow-hidden rounded-full bg-[#4b5a74]">
          <svg width="50" height="50" viewBox="0 0 50 50" fill="#fff">
            <path d="M25 6 C32 6 35.5 11 35.5 18 C37 19 36 23.5 34.6 24.3 C33.5 28.5 31.5 31 29.6 33 C29 37.5 34 38.5 40.5 39.5 C38 45 31 44 25 44 C19 44 12 45 9.5 39.5 C16 38.5 21 37.5 20.4 33 C18.5 31 16.5 28.5 15.4 24.3 C14 23.5 13 19 14.5 18 C14.5 11 18 6 25 6 Z" />
          </svg>
        </div>
      </header>

      <main className="flex pt-8 pl-8">
        <section className="w-[1407px] shrink-0">
          <div className="flex items-start gap-[42px]">
            <article className="h-[223px] w-[512px] shrink-0 rounded-[8px] bg-[#1d2638]">
              <div className="overflow-hidden rounded-t-[8px]">
                <CardHead title="Global" sub="Statistique global" small />
              </div>
              <div className="flex h-[170px] items-start">
                <Radar />
                <span className="-ml-px text-[20px] leading-[30px] font-light tracking-[0.01em] text-black">Test</span>
              </div>
            </article>
            <article className="h-[230px] w-[256px] shrink-0 overflow-hidden rounded-[8px] bg-[#1d2638]">
              <CardHead title="Diseases" sub="Statistique des maladies" small />
              <Trend vals={[8, 12, 2, 32, 10, 10]} x1={241.8} y0={112.5} />
            </article>
            <article className="h-[230px] w-[256px] shrink-0 overflow-hidden rounded-[8px] bg-[#1d2638]">
              <CardHead title="Patients" sub="Statistique des patients" small />
              <Trend vals={[8, 12, 2, 32, 10, 2]} x1={243} y0={113.4} />
            </article>
            <article className="h-[230px] w-[257px] shrink-0 overflow-hidden rounded-[8px] bg-[#1d2638]">
              <CardHead title="doctors" sub="Statistique des médecins" small />
              <Trend vals={[8, 12, 2, 32, 10, 24]} x1={244} y0={113.2} />
            </article>
          </div>
          <div className="mt-8 h-[654px] overflow-hidden rounded-t-[8px]">
            <GuineaMap />
          </div>
        </section>

        <aside className="ml-[41px] w-[388px] shrink-0">
          <article className="mx-[1px] h-[223px] overflow-hidden rounded-[8px] bg-[#1d2638]">
            <CardHead title="Pharmacies" sub="Statistique des pharmacies" />
          </article>

          <article className="mt-[31px] h-[399px] overflow-hidden rounded-[9px] bg-[#1d2638]">
            <div className="flex h-[51px] bg-[#1c2436] pl-[21px] text-white">
              <div className="w-[104px] shrink-0 pt-[5px]">
                <div className="text-[17.6px] leading-[23px] font-semibold tracking-[0.025em] whitespace-nowrap">Search By</div>
                <div className="text-[14.4px] leading-[19px] font-medium tracking-[0.02em]">date</div>
              </div>
              <DateField className="mt-[11px] w-[113px]" />
              <DateField className="mt-[11px] ml-[16px] w-[112px]" />
            </div>
            <div className="mt-[16px] ml-[83px] h-[29px] w-[221px] rounded-[5px] border-2 border-[#0f52ee] bg-[#1c2436]" />
            <div className="mt-[26px] text-[14.1px] leading-[25px] text-[#eceef0]">
              {Array.from({ length: 10 }, (_, i) => (
                <div key={i} className="grid grid-cols-[71px_107px_89px_60px] pl-[27px] whitespace-nowrap">
                  <span>1 2 3</span>
                  <span>(+0.12%)</span>
                  <span>0.0001</span>
                  <span>+0.0001</span>
                </div>
              ))}
            </div>
          </article>

          <article className="mt-[30px] h-[260px] overflow-hidden rounded-t-[9px] border border-b-0 border-[#1c2436]">
            <div className="-mt-px -ml-px">
              <CardHead title="Diseases" sub="Statistique des maladies" />
            </div>
            <AreaChart />
          </article>
        </aside>
      </main>
    </div>
  );
}
